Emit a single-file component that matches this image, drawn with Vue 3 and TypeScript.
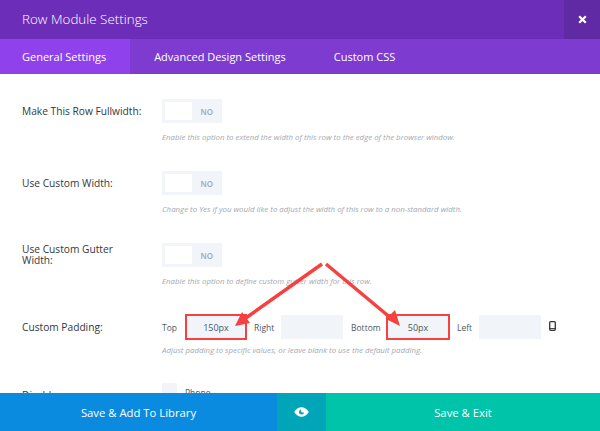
<script setup lang="ts">
interface Row { label: string; help: string }
const rows: Row[] = [
  { label: 'Make This Row Fullwidth:', help: 'Enable this option to extend the width of this row to the edge of the browser window.' },
  { label: 'Use Custom Width:', help: 'Change to Yes if you would like to adjust the width of this row to a non-standard width.' },
  { label: 'Use Custom Gutter Width:', help: 'Enable this option to define custom gutter width for this row.' },
]
const tabs = ['General Settings', 'Advanced Design Settings', 'Custom CSS']
</script>

<template>
  <div class="modal">
    <header class="head">
      <h1 class="title">Row Module Settings</h1>
      <button class="close" aria-label="Close">
        <svg width="9" height="9" viewBox="0 0 9 9"><path d="M1.200 1.200l6.600 6.600M7.800 1.200L1.200 7.800" stroke="#fff" stroke-width="2.200" fill="none" /></svg>
      </button>
    </header>
    <nav class="tabs">
      <a v-for="(t, i) in tabs" :key="t" class="tab" :class="{ active: i === 0 }">{{ t }}</a>
    </nav>
    <main class="body">
      <section v-for="r in rows" :key="r.label" class="row">
        <div class="line">
          <label class="label">{{ r.label }}</label>
          <div class="toggle"><span class="knob"></span><span class="no">NO</span></div>
        </div>
        <p class="help">{{ r.help }}</p>
      </section>
      <section class="row padrow">
        <div class="line">
          <label class="label">Custom Padding:</label>
          <div class="pads">
            <span class="pl tl">Top</span><span class="inp boxed">150px</span>
            <span class="pl rl">Right</span><span class="inp w62"></span>
            <span class="pl bl">Bottom</span><span class="inp boxed w62">50px</span>
            <span class="pl ll">Left</span><span class="inp w62"></span>
            <svg class="phone" width="7" height="10" viewBox="0 0 7 10"><rect x="0.700" y="0.700" width="5.600" height="8.600" rx="1" fill="none" stroke="#333" stroke-width="1.300" /><path d="M1 7.600h5" stroke="#333" stroke-width="1" /></svg>
          </div>
        </div>
        <p class="help tight">Adjust padding to specific values, or leave blank to use the default padding.</p>
      </section>
      <section class="row last">
        <div class="line top">
          <label class="label dis">Disable</label>
          <div class="check"></div>
          <span class="opt">Phone</span>
        </div>
      </section>
      <svg class="arrows" width="600" height="357" viewBox="0 74 600 357">
        <path d="M322 264L243 320M326 264L392 319" stroke="#f5413f" stroke-width="3.500" fill="none" />
        <path d="M235 326L242 312L250 323Z" fill="#f5413f" />
        <path d="M400 326L386 319L395 310Z" fill="#f5413f" />
      </svg>
    </main>
    <footer class="foot">
      <button class="fbtn lib">Save &amp; Add To Library</button>
      <button class="fbtn eye" aria-label="Preview">
        <svg width="15" height="10" viewBox="0 0 15 10"><path fill-rule="evenodd" d="M.2 5C2 1.900 4.600.3 7.500.3S13 1.900 14.800 5C13 8.100 10.400 9.700 7.500 9.700S2 8.100.2 5zM7.500 2.500a2.500 2.500 0 1 0 2.500 2.500 1.700 1.700 0 0 1-2.500-2.500z" fill="#fff" /></svg>
      </button>
      <button class="fbtn exit">Save &amp; Exit</button>
    </footer>
  </div>
</template>

<style>
html, body { margin: 0; background: #fff; }
</style>

<style scoped>
.modal { width: 600px; height: 431px; display: flex; flex-direction: column; overflow: hidden; font-family: "Open Sans", "Noto Sans", sans-serif; color: #32373c; }
.head { height: 39px; flex: none; background: #6c2eb9; display: flex; align-items: stretch; justify-content: space-between; }
.title { margin: 0; padding-left: 22px; font-size: 13.400px; line-height: 39px; font-weight: 300; color: #fff; }
.close { width: 36px; border: 0; padding: 0; background: #5f2aa4; display: flex; align-items: center; justify-content: center; }
.tabs { height: 35px; flex: none; background: #7e3bd0; display: flex; }
.tab { font-size: 11px; line-height: 35px; color: #fff; padding: 0 24px; font-weight: 400; }
.tab.active { background: #8f42ec; padding: 0 24px 0 22px; }
.body { position: relative; flex: 1; min-height: 0; overflow: hidden; padding-top: 25px; background: #fff; }
.row { height: 72px; padding-left: 22px; box-sizing: border-box; }
.padrow { height: 68px; }
.line { display: flex; align-items: center; height: 24px; }
.line.top { align-items: flex-start; }
.label { width: 140px; flex: none; font-size: 10.200px; line-height: 11px; font-weight: 500; padding-right: 19px; box-sizing: border-box; }
.dis { margin-top: 7px; }
.toggle { width: 60px; height: 24px; background: #f1f5f9; position: relative; display: flex; align-items: center; justify-content: flex-end; box-sizing: border-box; padding-right: 9px; }
.knob { position: absolute; left: 3px; top: 3px; width: 27px; height: 18px; background: #fff; }
.no { font-size: 8px; font-weight: 600; color: #a0a7b5; }
.help { margin: 9px 0 0 140px; font-size: 7.850px; line-height: 10px; font-style: italic; color: #a3a9b3; white-space: nowrap; }
.help.tight { margin-top: 6px; }
.pads { display: flex; align-items: center; height: 24px; }
.pl { font-size: 8.500px; color: #4e5763; }
.tl { width: 24px; }
.rl { width: 27px; margin-left: 8px; }
.bl { width: 36px; margin-left: 8px; }
.ll { width: 22px; margin-left: 8px; }
.inp { width: 60px; height: 24px; background: #f1f5f9; display: flex; align-items: center; justify-content: center; font-size: 9px; color: #4e5763; box-sizing: border-box; }
.w62 { width: 62px; }
.boxed { outline: 2px solid #f5413f; outline-offset: -1px; }
.phone { margin-left: 8px; margin-top: -3px; }
.check { width: 15px; height: 16px; background: #f1f5f9; }
.opt { font-size: 8.500px; line-height: 12px; margin: 4px 0 0 8px; color: #4e5763; }
.arrows { position: absolute; left: 0; top: 0; pointer-events: none; }
.foot { height: 38px; flex: none; display: flex; }
.fbtn { border: 0; padding: 0; margin: 0; color: #fff; font-family: inherit; font-size: 11.300px; font-weight: 500; display: flex; align-items: center; justify-content: center; }
.lib { width: 277px; background: #0b8bdf; }
.eye { width: 49px; background: #00a5b8; }
.exit { flex: 1; background: #00c4a9; }
</style>
